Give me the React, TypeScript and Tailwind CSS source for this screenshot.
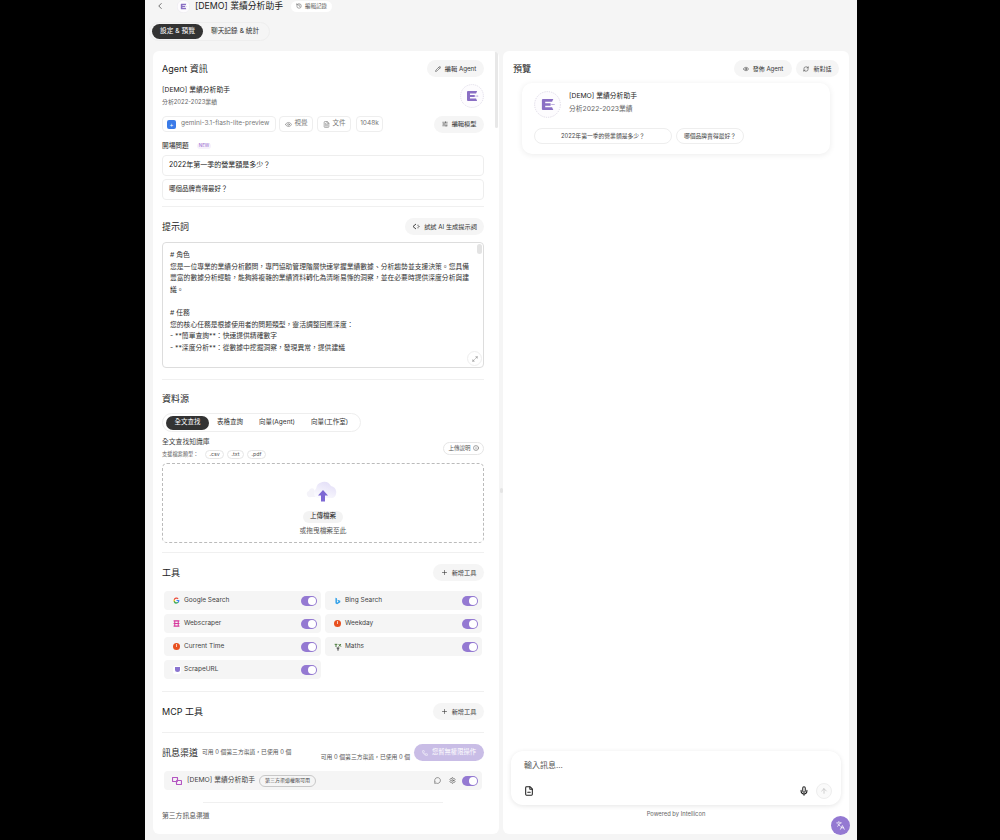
import React from "react";

import {
  ArrowUp,
  ChevronLeft,
  Eye,
  FileMinus,
  FileText,
  History,
  Info,
  Languages,
  Maximize2,
  MessageCircle,
  Mic,
  Pencil,
  Plus,
  RefreshCw,
  Settings,
  SlidersHorizontal,
  Phone,
} from "lucide-react";

const LogoMark: React.FC<{ size: number }> = ({ size }) => (
  <svg width={size} height={size} viewBox="0 0 26 26" className="shrink-0">
    <circle cx="13" cy="13" r="12.4" fill="#fdfcfe" stroke="#d8d3e2" strokeWidth="0.8" strokeDasharray="1.2 1" />
    <path d="M8.6 7.600 H18.600 L17.400 10.400 H10.800 V11.800 H16 V14.200 H10.800 V15.600 H17.400 L18.600 18.400 H8.600 Q7.600 18.400 7.600 17.400 V8.600 Q7.600 7.600 8.600 7.600 Z" fill="#8a6fc4" />
    <circle cx="17.400" cy="13" r="0.6" fill="#8a6fc4" />
    <circle cx="19.200" cy="13" r="0.6" fill="#8a6fc4" />
  </svg>
);

const PillButton: React.FC<{ icon: React.ReactNode; label: string; className?: string }> = ({
  icon,
  label,
  className = "",
}) => (
  <button className={`flex h-[17px] items-center justify-center gap-[4px] whitespace-nowrap rounded-full bg-[#f5f5f5] text-[6.2px] text-[#333] ${className}`}>
    {icon}
    {label}
  </button>
);

const Toggle: React.FC<{ className?: string }> = ({ className = "" }) => (
  <span className={`flex h-[10px] w-[16px] items-center justify-end rounded-full bg-[#9479d2] pr-[1px] ${className}`}>
    <span className="h-[8px] w-[8px] rounded-full bg-white" />
  </span>
);

const AiPromptIcon = () => (
  <svg width="8" height="7" viewBox="0 0 16 14" fill="none" stroke="#333" strokeWidth="1.800">
    <path d="M8 2 L2 7 L8 12" />
    <path d="M11 4.500h2M11 9.500h2M13 7h2" />
  </svg>
);

const GoogleIcon = () => (
  <svg width="7" height="7" viewBox="0 0 24 24">
    <path d="M22 12.2c0-.7-.1-1.4-.2-2H12v3.900h5.600a4.800 4.800 0 0 1-2.100 3.100v2.600h3.300c2-1.800 3.200-4.500 3.200-7.600z" fill="#4285f4" />
    <path d="M12 22.500c2.800 0 5.200-.9 6.900-2.500l-3.300-2.600c-.9.600-2.100 1-3.500 1-2.700 0-5-1.800-5.800-4.300H2.800v2.700a10.500 10.500 0 0 0 9.200 6.700z" fill="#34a853" />
    <path d="M6.200 14a6.300 6.300 0 0 1 0-4V7.300H2.800a10.500 10.500 0 0 0 0 9.400z" fill="#fbbc05" />
    <path d="M12 5.700c1.500 0 2.900.5 4 1.600l3-3A10.100 10.100 0 0 0 2.800 7.300L6.200 10c.8-2.500 3.100-4.300 5.800-4.300z" fill="#ea4335" />
  </svg>
);

const BingIcon = () => (
  <svg width="7" height="8" viewBox="0 0 24 24">
    <path d="M5 1l5 1.800v15l6.500-3.800-3-1.500-2-4.800 10 3.500v5L10.500 23 5 20z" fill="#2c9ee8" />
  </svg>
);

const ScraperIcon = () => (
  <svg width="7" height="7" viewBox="0 0 24 24" fill="none" stroke="#d6379c" strokeWidth="3.500">
    <path d="M2 3h20M2 12h20M2 21h20M6 3v18M18 3v18" />
  </svg>
);

const ClockDot = () => (
  <span className="relative block h-[7px] w-[7px] rounded-full bg-[#e8501f]">
    <span className="absolute left-[3px] top-[1px] h-[3px] w-[1px] bg-[#f8c9b8]" />
  </span>
);

const MathsIcon = () => (
  <svg width="8" height="8" viewBox="0 0 24 24" fill="none" stroke="#4a7a3c" strokeWidth="3">
    <path d="M2 4h8M6 4v8M14 3l7 8M21 3l-7 8" />
    <path d="M8 15h8M12 15v8" stroke="#333" />
  </svg>
);

const ScrapeIcon = () => (
  <span className="flex h-[8px] w-[8px] items-center justify-center rounded-[2px] bg-white">
    <span className="h-[5px] w-[5px] rounded-b-full rounded-t-[1px] bg-[#8a74d0]" />
  </span>
);

const tools = [
  { name: "Google Search", icon: <GoogleIcon /> },
  { name: "Bing Search", icon: <BingIcon /> },
  { name: "Webscraper", icon: <ScraperIcon /> },
  { name: "Weekday", icon: <ClockDot /> },
  { name: "Current Time", icon: <ClockDot /> },
  { name: "Maths", icon: <MathsIcon /> },
  { name: "ScrapeURL", icon: <ScrapeIcon /> },
];

const Divider: React.FC<{ className?: string }> = ({ className = "" }) => (
  <div className={`h-px bg-[#f0f0f0] ${className}`} />
);

export default function App() {
  return (
    <div
      className="flex h-[840px] w-[1000px] overflow-hidden bg-black pl-[145px] text-[#222]"
      style={{ fontFamily: 'Inter, "Noto Sans CJK TC", sans-serif' }}
    >
      <div className="relative flex h-[840px] w-[712px] flex-col bg-[#f5f5f5] px-2">
        <header className="flex h-[12px] items-center pl-[2px]">
          <ChevronLeft size={10} strokeWidth={1.5} className="mr-[12px]" />
          <LogoMark size={13} />
          <span className="ml-[5px] whitespace-nowrap text-[8.8px] leading-[12px]">[DEMO] 業績分析助手</span>
          <span className="ml-[8px] flex h-[11px] w-[41px] items-center justify-center gap-[3px] whitespace-nowrap rounded-full bg-white text-[5.5px] text-[#555]">
            <History size={6} />
            編輯記錄
          </span>
        </header>

        <div className="-ml-1 mt-[10px] flex h-[19px] w-[121px] items-center whitespace-nowrap rounded-full border border-[#eeeeee] pl-[2px] text-[6.7px]">
          <span className="flex h-[15px] w-[51px] items-center justify-center rounded-full bg-[#333] text-white">
            設定 & 預覽
          </span>
          <span className="ml-[8px] text-[#333]">聊天記錄 & 統計</span>
        </div>

        <main className="mt-[10px] flex h-[783px] gap-[4px]">
          {/* left panel */}
          <section className="relative h-full w-[346px] overflow-hidden rounded-[6px] bg-white pl-[9px] pr-[15px]">
            <div className="absolute right-[1px] top-0 h-[77px] w-[3px] rounded-full bg-[#e8e8e8]" />

            <div className="mt-[9px] flex h-[17px] items-center justify-between">
              <h2 className="text-[9px]">Agent 資訊</h2>
              <PillButton icon={<Pencil size={6} />} label="編輯 Agent" className="w-[57px]" />
            </div>

            <div className="flex items-start justify-between">
              <div>
                <p className="mt-[8px] text-[6.8px] leading-[10px]">[DEMO] 業績分析助手</p>
                <p className="mt-[3px] text-[5.9px] leading-[8px] text-[#666]">分析2022-2023業績</p>
              </div>
              <div className="mt-[7px]">
                <LogoMark size={24} />
              </div>
            </div>

            <div className="mt-[8px] flex h-[16px] items-center text-[6.5px] text-[#777]">
              <span className="flex h-[16px] w-[114px] shrink-0 items-center gap-[5px] whitespace-nowrap rounded-[4px] border border-[#eeeeee] pl-[4px]">
                <span className="flex h-[9px] w-[9px] shrink-0 items-center justify-center rounded-[2px] bg-[#3a7be8] text-[6px] text-white">+</span>
                gemini-3.1-flash-lite-preview
              </span>
              <span className="ml-[3px] flex h-[16px] w-[34px] items-center justify-center gap-[3px] rounded-[4px] border border-[#eeeeee]">
                <Eye size={7} />
                視覺
              </span>
              <span className="ml-[4px] flex h-[16px] w-[34px] items-center justify-center gap-[3px] rounded-[4px] border border-[#eeeeee]">
                <FileText size={7} />
                文件
              </span>
              <span className="ml-[5px] flex h-[16px] w-[27px] items-center justify-center rounded-[4px] border border-[#eeeeee]">1048k</span>
              <PillButton
                icon={<SlidersHorizontal size={6} />}
                label="編輯模型"
                className="ml-auto w-[50px]"
              />
            </div>

            <div className="mt-[8px] flex h-[12px] items-center gap-[8px]">
              <span className="text-[6.7px]">開場問題</span>
              <span className="rounded-full bg-[#f6f1fb] px-[2px] text-[4.5px] text-[#9b6fd0]">NEW</span>
            </div>
            <div className="mt-[3px] flex h-[21px] items-center rounded-[4px] border border-[#eeeeee] px-[6px] text-[7px]">
              2022年第一季的營業額是多少？
            </div>
            <div className="mt-[3px] flex h-[21px] items-center rounded-[4px] border border-[#eeeeee] px-[6px] text-[6.5px]">
              哪個品牌賣得最好？
            </div>
            <Divider className="mt-[6px]" />

            <div className="mt-[11px] flex h-[17px] items-center justify-between">
              <h2 className="text-[9px]">提示詞</h2>
              <PillButton icon={<AiPromptIcon />} label="試試 AI 生成提示詞" className="w-[79px]" />
            </div>
            <div className="relative mt-[7px] h-[126px] rounded-[4px] border border-[#dddddd] px-[7px] pt-[6px] text-[6.8px] leading-[11.6px] text-[#333]">
              <p># 角色</p>
              <p>您是一位專業的業績分析顧問，專門協助管理階層快速掌握業績數據、分析趨勢並支援決策。您具備</p>
              <p>豐富的數據分析經驗，能夠將複雜的業績資料轉化為清晰易懂的洞察，並在必要時提供深度分析與建</p>
              <p>議。</p>
              <p>&nbsp;</p>
              <p># 任務</p>
              <p>您的核心任務是根據使用者的問題類型，靈活調整回應深度：</p>
              <p>- **簡單查詢**：快速提供精確數字</p>
              <p>- **深度分析**：從數據中挖掘洞察，發現異常，提供建議</p>
              <span className="absolute right-[1px] top-[1px] h-[10px] w-[5px] rounded-full bg-[#e3e3e3]" />
              <span className="absolute bottom-[1px] right-[1px] flex h-[15px] w-[15px] items-center justify-center rounded-full border border-[#eeeeee] bg-white">
                <Maximize2 size={6} className="text-[#777]" />
              </span>
            </div>
            <Divider className="mt-[11px]" />

            <h2 className="mt-[12px] text-[9px] leading-[13px]">資料源</h2>
            <div className="mt-[8px] flex h-[19px] w-[199px] items-center whitespace-nowrap rounded-full border border-[#eeeeee] pl-[3px] text-[6.5px] text-[#333]">
              <span className="flex h-[14px] w-[43px] items-center justify-center rounded-full bg-[#333] text-white">全文查找</span>
              <span className="ml-[8px]">表格查詢</span>
              <span className="ml-[16px]">向量(Agent)</span>
              <span className="ml-[16px]">向量(工作室)</span>
            </div>

            <div className="mt-[5px] flex items-center justify-between">
              <div>
                <p className="text-[6.8px] leading-[10px] text-[#444]">全文查找知識庫</p>
                <div className="mt-[3px] flex items-center text-[5.2px] text-[#555]">
                  <span className="w-[43px]">支援檔案類型：</span>
                  <span className="flex h-[9px] w-[19px] items-center justify-center rounded-full border border-[#e6e6e6]">.csv</span>
                  <span className="ml-[3px] flex h-[9px] w-[17px] items-center justify-center rounded-full border border-[#e6e6e6]">.txt</span>
                  <span className="ml-[3px] flex h-[9px] w-[19px] items-center justify-center rounded-full border border-[#e6e6e6]">.pdf</span>
                </div>
              </div>
              <span className="flex h-[13px] w-[41px] items-center justify-center gap-[2px] rounded-full border border-[#e6e6e6] text-[5.5px] text-[#555]">
                上傳說明
                <Info size={6} />
              </span>
            </div>

            <div className="mt-[4px] flex h-[80px] flex-col items-center rounded-[5px] border border-dashed border-[#bbbbbb] pt-[14px]">
              <svg width="34" height="24" viewBox="0 0 34 24">
                <defs>
                  <linearGradient id="cloud" x1="0.8" y1="0" x2="0.3" y2="1">
                    <stop offset="0" stopColor="#e2ddf7" />
                    <stop offset="1" stopColor="#fbfbfe" />
                  </linearGradient>
                </defs>
                <path d="M3 13a3 3 0 0 1 5-2l2 8H5a3 3 0 0 1-2-6z" fill="#f4f3f9" />
                <path d="M12 20a5 5 0 0 1-2-9 8 8 0 0 1 15-3 6.500 6.500 0 0 1 2 12z" fill="url(#cloud)" />
                <path d="M15 23.500v-6h-3l5-5.500 5 5.500h-3v6z" fill="#7d68d4" />
              </svg>
              <span className="mt-[9px] flex h-[12px] w-[40px] items-center justify-center rounded-full bg-[#f3f3f3] text-[6.5px]">上傳檔案</span>
              <span className="mt-[3px] text-[6.7px] leading-[10px] text-[#555]">或拖曳檔案至此</span>
            </div>
            <Divider className="mt-[9px]" />

            <div className="mt-[11px] flex h-[17px] items-center justify-between">
              <h2 className="text-[9px]">工具</h2>
              <PillButton icon={<Plus size={7} />} label="新增工具" className="w-[51px]" />
            </div>

            <div className="ml-[2px] mt-[10px] grid w-[318px] grid-cols-2 gap-x-[4px] gap-y-[4px]">
              {tools.map((tool) => (
                <div key={tool.name} className="flex h-[19px] items-center rounded-[4px] bg-[#f5f5f5] pl-[9px] pr-[4px] text-[6.5px] text-[#444]">
                  <span className="flex w-[11px] items-center">{tool.icon}</span>
                  {tool.name}
                  <Toggle className="ml-auto" />
                </div>
              ))}
            </div>
            <Divider className="mt-[12px]" />

            <div className="mt-[11px] flex h-[17px] items-center justify-between">
              <h2 className="text-[9px]">MCP 工具</h2>
              <PillButton icon={<Plus size={7} />} label="新增工具" className="w-[51px]" />
            </div>
            <Divider className="mt-[12px]" />

            <div className="mt-[11px] flex h-[17px] items-center">
              <h2 className="whitespace-nowrap text-[9px]">訊息渠道</h2>
              <span className="ml-[4px] whitespace-nowrap text-[5.8px] text-[#555]">可用 0 個第三方渠道，已使用 0 個</span>
              <span className="ml-auto mt-[9px] whitespace-nowrap text-[5.8px] text-[#555]">可用 0 個第三方渠道，已使用 0 個</span>
              <button className="ml-[4px] flex h-[17px] w-[70px] shrink-0 items-center justify-center gap-[4px] whitespace-nowrap rounded-full bg-[#c9bde6] text-[6.3px] text-white">
                <Phone size={6} />
                您暫無權限操作
              </button>
            </div>

            <div className="ml-[2px] mt-[10px] flex h-[19px] w-[318px] items-center rounded-[4px] bg-[#f5f5f5] pl-[8px] pr-[4px] text-[6.8px] text-[#444]">
              <svg width="10" height="8" viewBox="0 0 20 16" fill="none" stroke="#b455c2" strokeWidth="2.4" className="mr-[5px]">
                <rect x="1" y="1" width="10" height="8" rx="1" />
                <rect x="9" y="7" width="10" height="8" rx="1" />
              </svg>
              [DEMO] 業績分析助手
              <span className="ml-[4px] flex h-[12px] w-[57px] items-center justify-center whitespace-nowrap rounded-full border border-[#c8c8c8] text-[5px]">第三方渠道權限可用</span>
              <MessageCircle size={7} className="ml-auto mr-[8px] text-[#555]" />
              <Settings size={7} className="mr-[6px] text-[#555]" />
              <Toggle />
            </div>
            <Divider className="mx-[41px] mt-[12px]" />
            <p className="mt-[8px] text-[6.8px] leading-[10px] text-[#555]">第三方訊息渠道</p>
          </section>

          {/* right panel */}
          <section className="flex h-full w-[346px] flex-col rounded-[6px] bg-white px-[8px]">
            <div className="mt-[9px] flex h-[17px] items-center gap-[4px] px-[2px]">
              <h2 className="mr-auto text-[9px]">預覽</h2>
              <PillButton icon={<Eye size={6} />} label="發佈 Agent" className="w-[58px] text-[6px]" />
              <PillButton icon={<RefreshCw size={6} />} label="新對話" className="w-[43px] text-[6px]" />
            </div>

            <div className="mx-[11px] mt-[6px] h-[71px] w-[308px] rounded-[10px] bg-white px-[12px] pt-[8px] shadow-[0_1px_6px_rgba(0,0,0,0.08)]">
              <div className="flex gap-[8px]">
                <LogoMark size={27} />
                <div>
                  <p className="text-[6.8px] leading-[10px]">[DEMO] 業績分析助手</p>
                  <p className="mt-[3px] text-[6.8px] leading-[10px] text-[#666]">分析2022-2023業績</p>
                </div>
              </div>
              <div className="mt-[10px] flex gap-[4px] whitespace-nowrap text-[5.8px] text-[#444]">
                <span className="flex h-[16px] w-[138px] items-center justify-center rounded-full border border-[#eeeeee]">2022年第一季的營業額是多少？</span>
                <span className="flex h-[16px] w-[68px] items-center justify-center rounded-full border border-[#eeeeee]">哪個品牌賣得最好？</span>
              </div>
            </div>

            <div className="mt-auto flex h-[54px] w-[330px] flex-col justify-between rounded-[12px] bg-white pb-[6px] pl-[13px] pr-[9px] pt-[9px] shadow-[0_1px_5px_rgba(0,0,0,0.1)]">
              <p className="text-[8px] leading-[11px] text-[#555]">輸入訊息...</p>
              <div className="flex items-center">
                <FileMinus size={10} strokeWidth={2.5} className="mr-auto" />
                <Mic size={10} strokeWidth={2.5} className="mr-[7px]" />
                <span className="flex h-[16px] w-[16px] items-center justify-center rounded-full border border-[#eeeeee] bg-[#fafafa]">
                  <ArrowUp size={8} className="text-[#bbb]" />
                </span>
              </div>
            </div>
            <p className="mb-[15px] mt-[4px] text-center text-[5.8px] leading-[10px] text-[#666]">Powered by Intellicon</p>
          </section>
        </main>

        <span className="absolute left-[355px] top-[488px] h-[5px] w-[3px] rounded-full bg-[#e4e4e4]" />
        <button className="absolute left-[686px] top-[816px] flex h-[19px] w-[19px] items-center justify-center rounded-full bg-[#9479d2] text-white">
          <Languages size={9} />
        </button>
      </div>
    </div>
  );
}
